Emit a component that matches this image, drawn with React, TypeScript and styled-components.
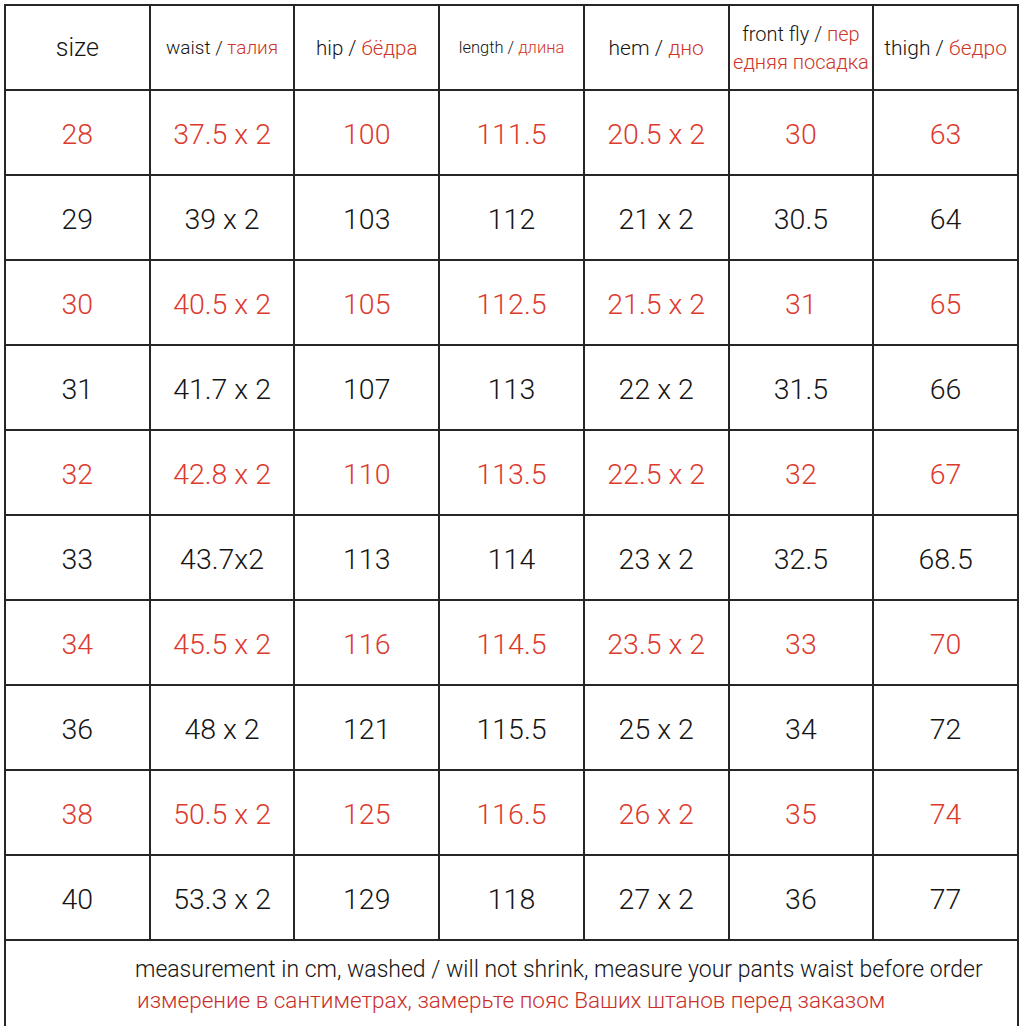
import React from 'react';
import styled, {createGlobalStyle} from 'styled-components';

const RED = `#dd3a2e`;
const HEAD_RED = `#cf3529`;
const INK = `#151515`;
const LINE = `#262626`;

const GlobalStyle = createGlobalStyle`
  html, body {
    margin: 0;
    padding: 0;
    background: #ffffff;
  }
`;

const Page = styled.div`
  padding-top: 4px;
  padding-left: 4px;
  width: 1024px;
  height: 1033px;
  box-sizing: border-box;
  font-family: Roboto, "Liberation Sans", sans-serif;
`;

const Table = styled.div`
  display: grid;
  grid-template-columns: repeat(7, 1fr);
  grid-auto-rows: 83px;
  gap: 2px;

  width: 1015px;
  padding: 2px;

  background: ${LINE};
  box-sizing: border-box;
`;

const Cell = styled.div<{red?: boolean}>`
  display: flex;
  align-items: center;
  justify-content: center;

  padding-top: 4px;

  font-size: 28.5px;
  font-weight: 300;
  color: ${({red}) => (red ? RED : INK)};

  background: #ffffff;
  box-sizing: border-box;
`;

const HeadCell = styled.div<{size: number}>`
  display: flex;
  align-items: center;
  justify-content: center;

  font-size: ${({size}) => size}px;
  font-weight: 300;
  line-height: 28px;
  text-align: center;
  white-space: nowrap;
  color: ${INK};

  background: #ffffff;
`;

const Ru = styled.span`
  color: ${HEAD_RED};
`;

const Footer = styled.div`
  grid-column: 1 / -1;

  display: flex;
  flex-direction: column;
  justify-content: center;

  height: 86px;
  padding-left: 129px;
  padding-top: 2px;

  font-size: 23px;
  font-weight: 300;
  line-height: 31px;
  color: ${INK};

  background: #ffffff;
  box-sizing: border-box;
`;

const FooterRu = styled.div`
  padding-left: 2px;
  font-size: 22.5px;
  color: #c9302a;
`;

const rows = [
  ['28', '37.5 x 2', '100', '111.5', '20.5 x 2', '30', '63'],
  ['29', '39 x 2', '103', '112', '21 x 2', '30.5', '64'],
  ['30', '40.5 x 2', '105', '112.5', '21.5 x 2', '31', '65'],
  ['31', '41.7 x 2', '107', '113', '22 x 2', '31.5', '66'],
  ['32', '42.8 x 2', '110', '113.5', '22.5 x 2', '32', '67'],
  ['33', '43.7x2', '113', '114', '23 x 2', '32.5', '68.5'],
  ['34', '45.5 x 2', '116', '114.5', '23.5 x 2', '33', '70'],
  ['36', '48 x 2', '121', '115.5', '25 x 2', '34', '72'],
  ['38', '50.5 x 2', '125', '116.5', '26 x 2', '35', '74'],
  ['40', '53.3 x 2', '129', '118', '27 x 2', '36', '77'],
];

const App: React.FunctionComponent = () => {
  return (
    <Page>
      <GlobalStyle />
      <Table>
        <HeadCell size={25}>size</HeadCell>
        <HeadCell size={19}>waist /&nbsp;<Ru>талия</Ru></HeadCell>
        <HeadCell size={20.5}>hip /&nbsp;<Ru>бёдра</Ru></HeadCell>
        <HeadCell size={16.5}>length /&nbsp;<Ru>длина</Ru></HeadCell>
        <HeadCell size={21}>hem /&nbsp;<Ru>дно</Ru></HeadCell>
        <HeadCell size={20}>
          <div>
            front fly / <Ru>пер</Ru>
            <br />
            <Ru>едняя посадка</Ru>
          </div>
        </HeadCell>
        <HeadCell size={21}>thigh /&nbsp;<Ru>бедро</Ru></HeadCell>
        {rows.map((row, i) =>
          row.map((value, j) => (
            <Cell key={`${i}-${j}`} red={i % 2 === 0}>{value}</Cell>
          ))
        )}
        <Footer>
          <div>measurement in cm, washed / will not shrink, measure your pants waist before order</div>
          <FooterRu>измерение в сантиметрах, замерьте пояс Ваших штанов перед заказом</FooterRu>
        </Footer>
      </Table>
    </Page>
  );
};

export default App;
